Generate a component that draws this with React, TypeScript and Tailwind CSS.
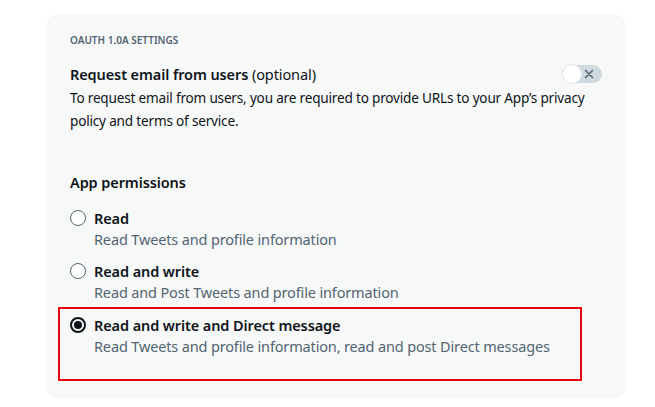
import React from "react";

function Radio({ checked }: { checked?: boolean }) {
  return checked ? (
    <span className="mt-[2px] flex h-4 w-4 shrink-0 items-center justify-center rounded-full border-2 border-[#0f1419]">
      <span className="h-[8px] w-[8px] rounded-full bg-[#0f1419]" />
    </span>
  ) : (
    <span className="mt-[2px] block h-4 w-4 shrink-0 rounded-full border border-[#536471] bg-white" />
  );
}

function Option({ title, desc, checked }: { title: string; desc: string; checked?: boolean }) {
  return (
    <div className="flex gap-2">
      <Radio checked={checked} />
      <div>
        <div className="text-[14.5px] font-semibold leading-[20px] tracking-[-0.1px] text-[#0f1419]">{title}</div>
        <div className="mt-px text-[14.5px] leading-[20px] tracking-[-0.15px] text-[#536471]">{desc}</div>
      </div>
    </div>
  );
}

export default function App() {
  return (
    <div className="min-h-[407px] w-[655px] bg-white pt-[15px] pl-[46px]" style={{ fontFamily: '"Noto Sans", "Open Sans", sans-serif' }}>
      <div className="w-[580px] rounded-[10px] bg-[#f7f9f9] px-6 pt-[19px] pb-[17px]">
        <div className="text-[10px] font-semibold leading-[12px] text-[#536471]">OAUTH 1.0A SETTINGS</div>
        <div className="mt-[18px] flex items-center justify-between">
          <div className="text-[14.5px] leading-[20px] tracking-[-0.1px] text-[#0f1419]">
            <span className="font-semibold">Request email from users</span> (optional)
          </div>
          <div className="relative flex h-[18px] w-10 items-center rounded-full bg-[#cfd9de]">
            <span className="absolute left-0 top-[-1px] h-5 w-5 rounded-full border border-[#e1e8ed] bg-white" />
            <svg className="absolute right-[8px] top-[4px]" width="10" height="10" viewBox="0 0 10 10">
              <path d="M1.5 1.5 L8.5 8.5 M8.5 1.5 L1.5 8.5" stroke="#536471" strokeWidth="1.5" strokeLinecap="round" />
            </svg>
          </div>
        </div>
        <p className="mt-[2px] w-[540px] text-[13.6px] leading-[23px] tracking-[-0.2px] text-[#0f1419]">
          To request email from users, you are required to provide URLs to your App’s privacy policy and terms of service.
        </p>
        <div className="mt-[40px] text-[14.5px] font-semibold leading-[20px] tracking-[-0.1px] text-[#0f1419]">App permissions</div>
        <div className="mt-[16px] flex flex-col gap-3">
          <Option title="Read" desc="Read Tweets and profile information" />
          <Option title="Read and write" desc="Read and Post Tweets and profile information" />
        </div>
        <div className="-ml-3 mt-[5px] w-[524px] border-2 border-[#e8000b] pl-[10px] pt-[6px] pb-[23px]">
          <Option checked title="Read and write and Direct message" desc="Read Tweets and profile information, read and post Direct messages" />
        </div>
      </div>
    </div>
  );
}
